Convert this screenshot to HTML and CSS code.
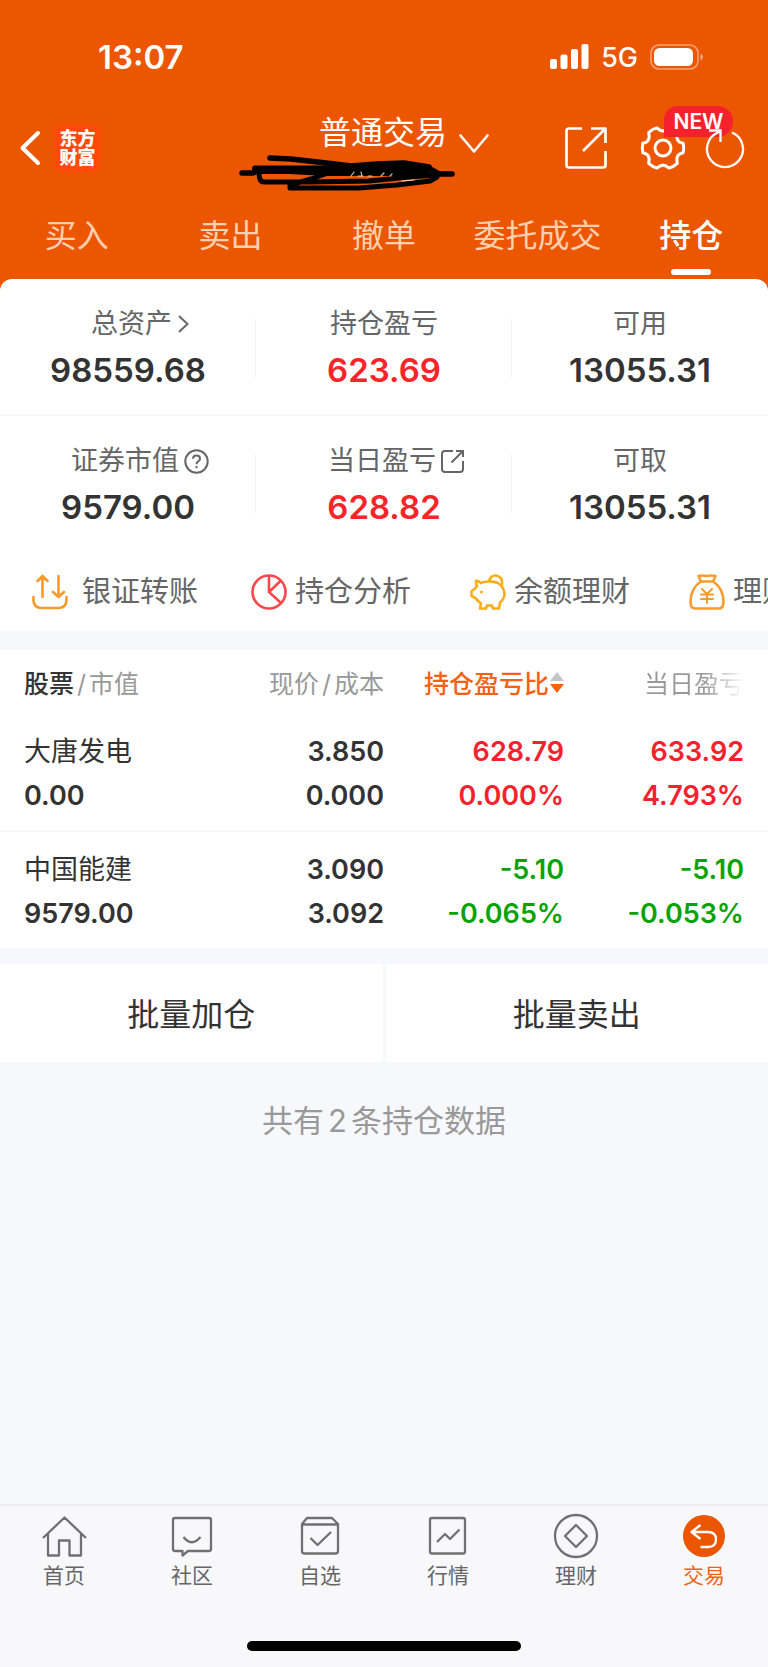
FILE: index.html
```html
<!DOCTYPE html>
<html lang="zh-CN">
<head>
<meta charset="utf-8">
<meta name="viewport" content="width=device-width, initial-scale=1">
<title>持仓</title>
<link rel="stylesheet" href="styles.css">
</head>
<body>
<div class="app">
  <header class="top">
    <div class="status">
      <span class="time">13:07</span>
      <div class="status-right">
        <svg class="signal" width="39" height="26" viewBox="0 0 39 26" fill="#fff"><rect x="0" y="15" width="7" height="10" rx="2"/><rect x="10.500" y="10.500" width="7" height="14.500" rx="2"/><rect x="21" y="5" width="7" height="20" rx="2"/><rect x="31.500" y="0" width="7" height="25" rx="2"/></svg>
        <span class="network">5G</span>
        <svg width="54" height="26" viewBox="0 0 54 26"><rect x="1" y="1" width="47" height="24" rx="8" fill="none" stroke="#fff" stroke-opacity=".45" stroke-width="1.600"/><rect x="4" y="4" width="39" height="18" rx="5.500" fill="#fff"/><path d="M50.500 9.500q2.500 1 2.500 3.500t-2.500 3.500z" fill="#fff" fill-opacity=".5"/></svg>
      </div>
    </div>
    <div class="bar">
      <div class="bar-left">
        <button class="icon-btn" aria-label="返回"><svg width="20" height="36" viewBox="0 0 20 36"><path d="M18 3 2.500 18 18 33" fill="none" stroke="#fff" stroke-width="4" stroke-linecap="round" stroke-linejoin="round"/></svg></button>
        <a class="logo" href="#"><span>东方</span><span>财富</span></a>
      </div>
      <div class="account">
        <button class="account-btn">普通交易<svg width="30" height="20" viewBox="0 0 30 20"><path d="M1.500 1.500 15 17.500 28.500 1.500" fill="none" stroke="#fff" stroke-width="2.600" stroke-linecap="round" stroke-linejoin="round"/></svg></button>
        <svg class="scribble" width="218" height="38" viewBox="0 0 218 38" fill="none" stroke="#000" stroke-linecap="round" stroke-linejoin="round"><path d="M31 3 52 4 96 9 112 11 138 9 165 8 190 12" stroke-width="5.500"/><path d="M3 18 H14 L22 14 H191 L200 19 H213" stroke-width="5.500"/><path d="M16 13.500H188V18H90L50 16H16Z" fill="#000" stroke-width="6"/><path d="M20 18q0 9 5 9H72L130 26 170 22 198 20M92 17 72 24 51 30V33H120L158 30 191 26 198 22V18" stroke-width="5"/><path d="M112 21 115 17M119 21H124M122 17l1 4M129 21H133M142 21l3-3M151 21l2-2M163 26l12-1" stroke="#fff" stroke-opacity=".75" stroke-width="1.200"/></svg>
      </div>
      <div class="bar-right">
        <button class="icon-btn" aria-label="分享"><svg width="42" height="42" viewBox="0 0 42 42" fill="none" stroke="#fff" stroke-width="2.700" stroke-linecap="butt" stroke-linejoin="round"><path d="M17 1.500H4Q1.500 1.500 1.500 4V38Q1.500 40.500 4 40.500H38Q40.500 40.500 40.500 38V24M26 1.500H40.500V16M40 2 18 24"/></svg></button>
        <button class="icon-btn gear" aria-label="设置"><svg width="44" height="44" viewBox="0 0 44 44" fill="none" stroke="#fff" stroke-width="3" stroke-linejoin="round"><path d="M42.200 17.300Q43.200 22 42.200 26.700 34.100 28 36.300 37.400 32.500 41 28.100 42.100 22 36 15.900 42.100 11.500 41 7.700 37.400 9.900 28 1.800 26.700 .800 22 1.800 17.300 9.900 16 7.700 6.600 11.500 3 15.900 1.900 22 8 28.100 1.900 32.500 3 36.300 6.600 34.100 16 42.200 17.300Z"/><circle cx="22" cy="22" r="8"/></svg><span class="badge">NEW</span></button>
        <button class="icon-btn refresh" aria-label="刷新"><svg width="38" height="40" viewBox="0 0 38 40" fill="none" stroke="#fff" stroke-width="2.300"><path d="M26 4.500A18 18 0 1 1 12 4.500L14 3M3 2.500H14.500V14"/></svg></button>
      </div>
    </div>
    <nav class="tabs">
      <a href="#">买入</a><a href="#">卖出</a><a href="#">撤单</a><a href="#">委托成交</a><a class="on" href="#">持仓</a>
    </nav>
  </header>

  <main>
    <section class="summary">
      <div class="cell"><a class="label shifted" href="#">总资产<svg width="12" height="20" viewBox="0 0 12 20"><path d="M2 2 10.500 10 2 18" fill="none" stroke="#666" stroke-width="2"/></svg></a><b>98559.68</b></div>
      <div class="cell"><span class="label">持仓盈亏</span><b class="up">623.69</b></div>
      <div class="cell"><span class="label">可用</span><b>13055.31</b></div>
      <div class="cell"><span class="label shifted">证券市值<svg width="25" height="25" viewBox="0 0 25 25" fill="none" stroke="#666" stroke-width="2"><circle cx="12.500" cy="12.500" r="11.200"/><path d="M9 9.800Q9 6.500 12.500 6.500T16 9.700Q16 11.300 14.200 12.300 12.500 13.300 12.500 15.300M12.500 17v2.200"/></svg></span><b>9579.00</b></div>
      <div class="cell"><a class="label shifted" href="#">当日盈亏<svg width="23" height="23" viewBox="0 0 23 23" fill="none" stroke="#666" stroke-width="2"><path d="M12 1H4Q1 1 1 4V19Q1 22 4 22H19Q22 22 22 19V11M15 1H22V7M21.500 1.500 10.500 12.500"/></svg></a><b class="up">628.82</b></div>
      <div class="cell"><span class="label">可取</span><b>13055.31</b></div>
    </section>

    <nav class="quick">
      <a class="wide" href="#"><svg width="36" height="36" viewBox="0 0 36 36" fill="none" stroke="#f79a2b" stroke-width="2.600" stroke-linecap="round" stroke-linejoin="round"><path d="M10.500 23V2M5.500 7 10.500 2 15.500 7M26.500 2V23M21 18 26.500 23 32 18M1.500 23V26Q1.500 34 10 34H26Q34.500 34 34.500 26V23"/></svg>银证转账</a>
      <a href="#"><svg width="36" height="36" viewBox="0 0 36 36" fill="none" stroke="#f8484d" stroke-width="2.600" stroke-linejoin="round"><circle cx="18" cy="18" r="16.500"/><path d="M18 1.500V18L30 29M18 18 29.500 7"/></svg>持仓分析</a>
      <a href="#"><svg width="36" height="36" viewBox="0 0 36 36" fill="none" stroke="#f9ad17" stroke-width="2.600" stroke-linecap="round" stroke-linejoin="round"><path d="M11 9Q7 6 6 7 5.500 8 7 12 5.500 14 4 15.500L1.500 17V22Q6 23.500 8 27L11 29.500 10 34.500H16L17 31.500H22L23 34.500H29L30 28.500Q34.500 25 34.500 19.500 34 13 28 9 23 7 17 7.500 13 8 11 9ZM19 7Q21 1 26 1.500 33 2.500 32 11"/><circle cx="11.500" cy="18" r="1" fill="#f9ad17" stroke-width="1"/></svg>余额理财</a>
      <a href="#"><svg width="36" height="36" viewBox="0 0 36 36" fill="none" stroke="#fa9a2d" stroke-width="2.600" stroke-linecap="round" stroke-linejoin="round"><path d="M12 7.500 9.500 2Q13 1 17.500 2 22 1 26.500 2L24 7.500ZM12 7.500Q1.500 14 1.500 28 1.500 34.500 6 34.500H30Q34.500 34.500 34.500 28 34.500 14 24 7.500"/><path d="M13 15 18 20 23 15M18 20V29M12 20.500H24M12 25H24" stroke-width="2"/></svg>理财</a>
    </nav>

    <section class="holdings">
      <table>
        <thead><tr>
          <th><strong>股票</strong><i>/</i>市值</th>
          <th>现价<i>/</i>成本</th>
          <th><button class="sort">持仓盈亏比<svg width="14" height="21" viewBox="0 0 14 21"><path d="M7 0 14 9H0Z" fill="#c4c5c7"/><path d="M0 12H14L7 21Z" fill="#f5610f"/></svg></button></th>
          <th><span class="fade">当日盈亏</span></th>
        </tr></thead>
        <tbody>
          <tr><td><span class="name">大唐发电</span><span>0.00</span></td><td><span>3.850</span><span>0.000</span></td><td class="up"><span>628.79</span><span>0.000%</span></td><td class="up"><span>633.92</span><span>4.793%</span></td></tr>
          <tr><td><span class="name">中国能建</span><span>9579.00</span></td><td><span>3.090</span><span>3.092</span></td><td class="down"><span>-5.10</span><span>-0.065%</span></td><td class="down"><span>-5.10</span><span>-0.053%</span></td></tr>
        </tbody>
      </table>
    </section>

    <div class="batch"><button>批量加仓</button><button>批量卖出</button></div>
    <p class="count">共有<span>2</span>条持仓数据</p>
  </main>

  <footer class="bottom">
    <nav class="dock">
      <a href="#"><svg width="44" height="44" viewBox="0 0 44 44"><path d="M1 24 22.500 3.500 44 24M6 20V41.500H17V26.500H27.500V41.500H39V20"/></svg>首页</a>
      <a href="#"><svg width="44" height="44" viewBox="0 0 44 44"><path d="M5 4H39Q41 4 41 6V35Q41 37 39 37H18L12.500 41.500V37H5Q3 37 3 35V6Q3 4 5 4ZM13.500 23Q21.500 33.500 30.500 23"/></svg>社区</a>
      <a href="#"><svg width="44" height="44" viewBox="0 0 44 44"><path d="M4 10 9 4H34L40 10V37Q40 39.500 37.500 39.500H6.500Q4 39.500 4 37ZM4 10.500H40M12.500 24 19.500 31 33 18"/></svg>自选</a>
      <a href="#"><svg width="44" height="44" viewBox="0 0 44 44"><rect x="4" y="4" width="35" height="35.500" rx="2"/><path d="M11 28 19 20 24 25 33.500 15.500"/></svg>行情</a>
      <a href="#"><svg width="44" height="44" viewBox="0 0 44 44"><circle cx="22" cy="22" r="21"/><path d="M22 11 33 22 22 33 11 22Z"/></svg>理财</a>
      <a class="on" href="#"><svg width="44" height="44" viewBox="0 0 44 44"><circle cx="22" cy="22" r="21" fill="#ec5600" stroke="none"/><path d="M18.500 11 9.500 18 18.500 25M10 18H26Q34 18 34 25.500T26 33H18.500" stroke="#fff"/></svg>交易</a>
    </nav>
    <div class="home"></div>
  </footer>
</div>
</body>
</html>
```
FILE: styles.css
```css
* { box-sizing: border-box; }

body {
  margin: 0;
  background: #f7f8fb;
  color: #333;
  font-family: Inter, "Noto Sans CJK SC", sans-serif;
}

a { color: inherit; text-decoration: none; }

button {
  padding: 0;
  border: 0;
  background: none;
  color: inherit;
  font: inherit;
  cursor: pointer;
}

svg { display: block; flex: none; overflow: visible; }
i { font-style: normal; }

.app { display: flex; flex-direction: column; min-height: 100vh; }

/* Header */
.top { background: #ec5600; color: #fff; padding-bottom: 12px; }

.status {
  display: flex;
  justify-content: space-between;
  align-items: center;
  height: 100px;
  padding: 14px 64px 0 98px;
}
.time { font-size: 33px; font-weight: 600; }
.status-right { display: flex; align-items: center; gap: 12px; }
.network { font-size: 27px; font-weight: 500; }

.bar {
  display: grid;
  grid-template-columns: 1fr auto 1fr;
  align-items: center;
  height: 96px;
  padding: 0 24px 0 20px;
}
.bar-left { display: flex; align-items: center; gap: 14px; }
.logo {
  display: flex;
  flex-direction: column;
  align-items: center;
  justify-content: center;
  width: 47px;
  height: 47px;
  border-radius: 8px;
  background: #ff4a0c;
  font-size: 18px;
  line-height: 19px;
  font-weight: 900;
}
.account { position: relative; padding-bottom: 30px; }
.account-btn {
  display: flex;
  align-items: center;
  gap: 12px;
  padding-left: 44px;
  font-size: 32px;
  line-height: 32px;
}
.account-btn svg { margin-top: 22px; }
.scribble { position: absolute; left: -36px; top: 43px; }
.bar-right { display: flex; align-items: center; justify-content: flex-end; }
.gear { position: relative; margin-left: 34px; }
.refresh { position: relative; margin-left: 21px; }
.badge {
  position: absolute;
  left: 23px;
  top: -20px;
  width: 69px;
  height: 31px;
  border-radius: 14px 16px 16px 0;
  background: #f5222d;
  font-size: 21px;
  line-height: 31px;
  font-weight: 600;
}

.tabs { display: grid; grid-template-columns: repeat(5, 1fr); }
.tabs a {
  position: relative;
  height: 71px;
  padding-top: 16px;
  font-size: 32px;
  line-height: 48px;
  text-align: center;
  color: #ffd0b0;
}
.tabs .on { color: #fff; font-weight: 500; }
.tabs .on::after {
  content: "";
  position: absolute;
  left: calc(50% - 20px);
  bottom: -8px;
  width: 40px;
  height: 6px;
  border-radius: 3px;
  background: #fff;
}

/* Account summary */
main { flex: 1; background: linear-gradient(#ec5600 20px, transparent 20px); }
.summary {
  display: grid;
  grid-template-columns: repeat(3, 1fr);
  border-radius: 12px 12px 0 0;
  background: #fff;
}
.cell {
  position: relative;
  display: flex;
  flex-direction: column;
  align-items: center;
  gap: 6px;
  height: 137px;
  padding-top: 29px;
}
.cell:nth-child(-n+3) { border-bottom: 2px solid #f8f8f9; }
.cell:not(:nth-child(3n))::after {
  content: "";
  position: absolute;
  right: 0;
  top: 39px;
  width: 1px;
  height: 59px;
  background: #f3f3f5;
}
.label {
  display: flex;
  align-items: center;
  gap: 5px;
  font-size: 27px;
  line-height: 32px;
  color: #666;
}
.shifted { padding-left: 24px; }
.cell b { font-size: 33px; line-height: 48px; font-weight: 600; }

.up { color: #f5222d; }
.down { color: #09a309; }
.cell .up { color: #fb2429; }

.quick {
  display: flex;
  overflow: hidden;
  padding: 19px 0 19px 32px;
  background: #fff;
}
.quick a {
  display: flex;
  flex: none;
  align-items: center;
  gap: 8px;
  width: 219px;
  font-size: 29px;
  line-height: 40px;
  color: #666;
}
.quick .wide { gap: 14px; }

/* Holdings */
.holdings { margin-top: 19px; background: #fff; }
table { width: 100%; table-layout: fixed; border-collapse: collapse; }
th, td { padding: 0; text-align: right; }
th:nth-child(1), th:nth-child(2) { width: 25%; }
th:nth-child(3) { width: 180px; }
th:first-child, td:first-child { padding-left: 24px; text-align: left; }
th:last-child, td:last-child { padding-right: 24px; }
th { height: 64px; font-size: 25px; font-weight: 400; color: #999; white-space: nowrap; }
th strong { font-weight: 500; color: #333; }
th i { margin: 0 3px; }
.sort { display: inline-flex; align-items: center; gap: 1px; color: #f5610f; font-weight: 500; }
.fade {
  background: linear-gradient(90deg, #999 60%, #fff 100%);
  background-clip: text;
  color: transparent;
}
td { padding-top: 16px; padding-bottom: 12px; font-size: 27px; line-height: 44px; font-weight: 600; }
td span { display: block; }
td .name { font-weight: 400; }
tbody tr + tr td { border-top: 2px solid #f8f8f9; }

.batch { display: grid; grid-template-columns: 1fr 1fr; gap: 3px; margin-top: 16px; }
.batch button { height: 98px; padding-bottom: 2px; background: #fff; font-size: 32px; }

.count { margin: 35px 0; font-size: 31px; line-height: 48px; text-align: center; color: #999; }
.count span { margin: 0 4px; }

/* Bottom navigation */
.bottom { border-top: 2px solid #ebedf0; background: #f8f8fb; }
.dock { display: grid; grid-template-columns: repeat(6, 1fr); padding-top: 8px; }
.dock a {
  display: flex;
  flex-direction: column;
  align-items: center;
  gap: 2px;
  font-size: 21px;
  line-height: 32px;
  color: #666;
}
.dock svg { fill: none; stroke: #707070; stroke-width: 2.3; stroke-linejoin: round; }
.dock .on { color: #f5610f; }
.home {
  width: 274px;
  height: 10px;
  margin: 49px auto 16px;
  border-radius: 5px;
  background: #000;
}
```
